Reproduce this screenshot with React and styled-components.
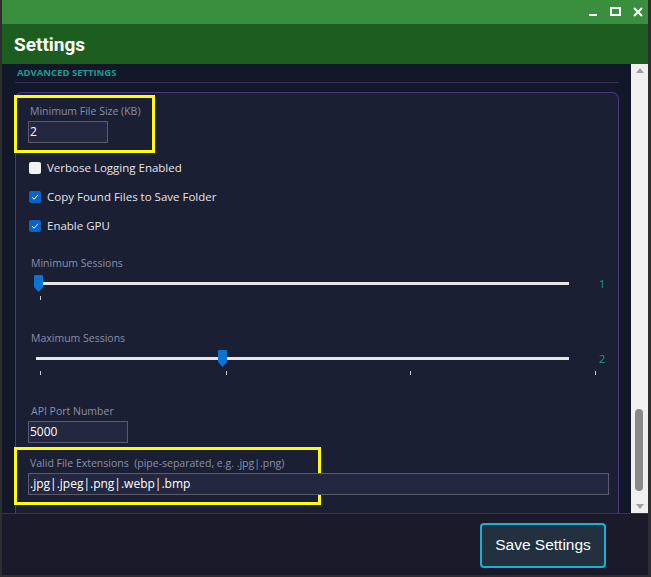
import React from 'react';
import styled, { createGlobalStyle } from 'styled-components';

const Global = createGlobalStyle`
  html, body { margin: 0; padding: 0; background: #2b2b2b; }
  body { font-family: "Open Sans", "Noto Sans", sans-serif; }
`;

const Window = styled.div`
  width: 651px;
  height: 577px;
  display: flex;
  flex-direction: column;
  background: #1a1a2b;
  box-sizing: border-box;
  border-left: 2px solid #2e2e2e;
  border-right: 3px solid #2e2e2e;
  border-bottom: 2px solid #2e2e2e;
  overflow: hidden;
`;

const TitleBar = styled.div`
  height: 24px;
  background: #3a8f3e;
  display: flex;
  justify-content: flex-end;
  align-items: center;
  gap: 12px;
  padding-right: 8px;
  margin: 0 -3px 0 -2px;
`;

const Header = styled.div`
  height: 40px;
  background: #1d5e20;
  display: flex;
  align-items: center;
  padding-left: 14px;
  margin: 0 -3px 0 -2px;
  color: #fff;
  font-family: "Roboto", "Noto Sans", sans-serif;
  font-weight: 700;
  font-size: 19px;
`;

const Body = styled.div`
  height: 449px;
  display: flex;
  background: #13172a;
`;

const Scroll = styled.div`
  flex: 1;
  padding: 0 12px 0 13px;
`;

const SectionTitle = styled.div`
  color: #1a9e8e;
  font-size: 9.5px;
  font-weight: 700;
  padding: 2px 0 0 2px;
  height: 16px;
  border-bottom: 1px solid #3a2f5a;
  margin-bottom: 9px;
`;

const Card = styled.div`
  background: #1b1f33;
  border: 1px solid #4a3a7a;
  border-bottom: none;
  border-radius: 7px 7px 0 0;
  padding: 0 12px 0 12px;
  height: 440px;
  box-sizing: border-box;
`;

const Highlight = styled.div`
  border: 3px solid #ffff00;
  margin-left: -14px;
  padding: 6px 11px 7px 11px;
  width: ${p => p.$w}px;
  box-sizing: border-box;
  margin-top: ${p => p.$mt || 0}px;
`;

const Label = styled.div`
  color: #8a8fa8;
  font-size: 10.5px;
  margin-bottom: ${p => p.$mb ?? 3}px;
  padding-left: ${p => p.$pl ?? 3}px;
`;

const Input = styled.div`
  width: ${p => p.$w}px;
  height: 22px;
  box-sizing: border-box;
  background: #232740;
  border: 1px solid #5a5a6a;
  color: #fff;
  font-size: 12px;
  line-height: 20px;
  padding-left: 1px;
`;

const CheckRow = styled.div`
  display: flex;
  align-items: center;
  gap: 6px;
  height: 29px;
  padding-left: 1px;
  color: #e4e4ea;
  font-size: 11.5px;
`;

const Box = styled.span`
  width: 12px;
  height: 12px;
  border-radius: 2px;
  background: ${p => (p.$on ? '#0a64c8' : '#f2f2f2')};
  display: flex;
  align-items: center;
  justify-content: center;
`;

const SliderBlock = styled.div`
  margin-top: ${p => p.$mt}px;
`;

const SliderRow = styled.div`
  display: flex;
  align-items: center;
  height: 26px;
`;

const Track = styled.div`
  position: relative;
  width: 533px;
  height: 3px;
  margin-left: 8px;
  background: #e6e6e6;
`;

const Thumb = styled.svg`
  position: absolute;
  top: -7px;
  left: ${p => p.$x}px;
`;

const Ticks = styled.div`
  position: relative;
  height: 10px;
`;

const Tick = styled.span`
  position: absolute;
  top: 0;
  width: 1px;
  height: 4px;
  background: #cfcfcf;
  left: ${p => p.$x}px;
`;

const Value = styled.span`
  color: #1a9e8e;
  font-size: 11px;
  margin-left: 30px;
`;

const ScrollBar = styled.div`
  width: 17px;
  background: #f0f0f0;
  margin-right: 0;
  position: relative;
  display: flex;
  flex-direction: column;
  align-items: center;
  justify-content: space-between;
  padding: 4px 0;
  box-sizing: border-box;
`;

const ScrollThumb = styled.div`
  position: absolute;
  top: 345px;
  left: 4px;
  width: 8px;
  height: 82px;
  border-radius: 4px;
  background: #8a8a8a;
`;

const Arrow = styled.span`
  width: 0;
  height: 0;
  border-left: 4px solid transparent;
  border-right: 4px solid transparent;
  ${p => (p.$down ? 'border-top: 5px solid #a0a0a0;' : 'border-bottom: 5px solid #a0a0a0;')}
`;

const Footer = styled.div`
  flex: 1;
  border-top: 1px solid #3a2f5a;
  background: #1a1a2b;
  display: flex;
  justify-content: flex-end;
  align-items: center;
  padding-right: 42px;
`;

const SaveButton = styled.button`
  width: 126px;
  height: 45px;
  border: 2px solid #1ab0d8;
  border-radius: 4px;
  background: #22303f;
  color: #fff;
  font-family: "Liberation Sans", Arial, sans-serif;
  font-size: 15.5px;
  margin-top: 1px;
`;

const Check = () => (
  <svg width="8" height="8" viewBox="0 0 8 8">
    <path d="M1 4.2 L3.2 6.2 L7 1.8" stroke="#fff" strokeWidth="1" fill="none" />
  </svg>
);

const Slider = ({ label, x, ticks, value, mt }) => (
  <SliderBlock $mt={mt}>
    <Label $mb={0} $pl={3}>{label}</Label>
    <SliderRow>
      <Track>
        <Thumb $x={x} width="9" height="17" viewBox="0 0 9 17">
          <path d="M0 1 Q0 0 1 0 H8 Q9 0 9 1 V12 L4.5 17 L0 12 Z" fill="#0a74d4" />
        </Thumb>
      </Track>
      <Value>{value}</Value>
    </SliderRow>
    <Ticks>
      {ticks.map(t => <Tick key={t} $x={t} />)}
    </Ticks>
  </SliderBlock>
);

export default function App() {
  return (
    <Window>
      <Global />
      <TitleBar>
        <svg width="10" height="10" viewBox="0 0 10 10"><rect x="1" y="7" width="8" height="2" fill="#fff" /></svg>
        <svg width="11" height="10" viewBox="0 0 11 10"><rect x="1" y="1" width="9" height="7" stroke="#fff" strokeWidth="2" fill="none" /></svg>
        <svg width="10" height="10" viewBox="0 0 10 10"><path d="M1 1 L9 9 M9 1 L1 9" stroke="#fff" strokeWidth="2" /></svg>
      </TitleBar>
      <Header>Settings</Header>
      <Body>
        <Scroll>
          <SectionTitle>ADVANCED SETTINGS</SectionTitle>
          <Card>
            <Highlight $w={141} $mt={2}>
              <Label $pl={2}>Minimum File Size (KB)</Label>
              <Input $w={80}>2</Input>
            </Highlight>
            <CheckRow><Box /> Verbose Logging Enabled</CheckRow>
            <CheckRow><Box $on><Check /></Box> Copy Found Files to Save Folder</CheckRow>
            <CheckRow><Box $on><Check /></Box> Enable GPU</CheckRow>
            <Slider label="Minimum Sessions" x={-2} ticks={[12]} value="1" mt={16} />
            <Slider label="Maximum Sessions" x={182} ticks={[12, 198, 382, 567]} value="2" mt={25} />
            <Label $pl={3} style={{ marginTop: 23 }}>API Port Number</Label>
            <Input $w={100}>5000</Input>
            <Highlight $w={307} $mt={4}>
              <Label $pl={2}>Valid File Extensions&nbsp; (pipe-separated, e.g. .jpg|.png)</Label>
              <Input $w={581}>.jpg|.jpeg|.png|.webp|.bmp</Input>
            </Highlight>
          </Card>
        </Scroll>
        <ScrollBar>
          <Arrow />
          <ScrollThumb />
          <Arrow $down />
        </ScrollBar>
      </Body>
      <Footer>
        <SaveButton>Save Settings</SaveButton>
      </Footer>
    </Window>
  );
}
